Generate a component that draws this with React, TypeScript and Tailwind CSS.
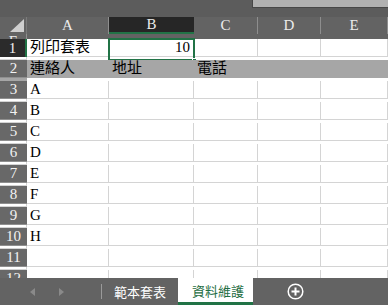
import React from 'react';

const FONT = { fontFamily: '"Liberation Serif", "Noto Sans CJK TC", serif' };
const COLS = ['A', 'B', 'C', 'D', 'E', 'F'];
const GRID = 'grid grid-cols-[27px_82px_85px_64px_63px_67px]';

type Row = { n: number; cells: string[]; fill?: boolean };

const rows: Row[] = [
  { n: 1, cells: ['列印套表', '10', '', '', '', ''] },
  { n: 2, cells: ['連絡人', '地址', '電話', '', '', ''], fill: true },
  { n: 3, cells: ['A', '', '', '', '', ''] },
  { n: 4, cells: ['B', '', '', '', '', ''] },
  { n: 5, cells: ['C', '', '', '', '', ''] },
  { n: 6, cells: ['D', '', '', '', '', ''] },
  { n: 7, cells: ['E', '', '', '', '', ''] },
  { n: 8, cells: ['F', '', '', '', '', ''] },
  { n: 9, cells: ['G', '', '', '', '', ''] },
  { n: 10, cells: ['H', '', '', '', '', ''] },
  { n: 11, cells: ['', '', '', '', '', ''] },
  { n: 12, cells: ['', '', '', '', '', ''] },
];

export default function App() {
  return (
    <div className="w-[388px] h-[305px] overflow-hidden flex flex-col bg-[#5c5c5c] text-[15px] leading-none" style={FONT}>
      {/* top strip */}
      <div className="h-[17px] shrink-0 flex justify-end">
        <div className="w-[136px] h-[8px] bg-[#b1b1b1] border-l border-b border-[#474747]" />
      </div>

      {/* sheet */}
      <div className="flex-1 overflow-hidden bg-white">
        {/* column headers */}
        <div className={`${GRID} h-[22px] bg-[#636363] text-[#ececec]`}>
          <div className="relative border-r border-[#7a7a7a]">
            <svg className="absolute right-[2px] bottom-[2px]" width="14" height="13" viewBox="0 0 14 13">
              <polygon points="14,0 14,13 0,13" fill="#cfcfcf" />
            </svg>
          </div>
          {COLS.map((c) => (
            <div
              key={c}
              className={
                c === 'B'
                  ? 'flex items-center justify-center bg-[#262626] border-b-2 border-[#217346]'
                  : 'flex items-center justify-center border-r border-[#8e8e8e]'
              }
            >
              {c}
            </div>
          ))}
        </div>

        {rows.map((r) => (
          <div key={r.n} className={`${GRID} h-[21px] relative`}>
            <div
              className={
                r.n === 1
                  ? 'flex items-center justify-center bg-[#2b2b2b] text-[#f2f2f2] border-r-2 border-[#217346]'
                  : 'flex items-center justify-center bg-[#686868] text-[#f2f2f2] border-b border-[#8f8f8f]'
              }
            >
              {r.n}
            </div>
            {r.cells.map((v, i) => (
              <div
                key={i}
                className={
                  r.fill
                    ? 'flex items-center px-[3px] bg-[#a6a6a6] text-black border-b border-[#a6a6a6]'
                    : `flex items-center px-[3px] text-black border-r border-b border-[#d4d4d4] ${i === 1 && r.n === 1 ? 'justify-end' : ''}`
                }
              >
                {v}
              </div>
            ))}
            {r.n === 1 && (
              <div className="absolute left-[108px] top-[-1px] w-[87px] h-[23px] border-2 border-[#217346] pointer-events-none">
                <div className="absolute right-[-4px] bottom-[-4px] w-[5px] h-[5px] bg-[#217346] border border-white" />
              </div>
            )}
          </div>
        ))}
      </div>

      {/* sheet tabs */}
      <div className="h-[27px] shrink-0 flex items-stretch bg-[#636363] text-[13px]" style={{ fontFamily: '"Noto Sans CJK TC", sans-serif' }}>
        <div className="w-[102px] flex items-center pl-[30px] gap-[24px] border-r border-[#9a9a9a] my-[6px]">
          <svg width="5" height="8" viewBox="0 0 5 8"><polygon points="5,0 5,8 0,4" fill="#8a8a8a" /></svg>
          <svg width="5" height="8" viewBox="0 0 5 8"><polygon points="0,0 0,8 5,4" fill="#8a8a8a" /></svg>
        </div>
        <div className="w-[76px] flex items-center pl-[12px] text-white">範本套表</div>
        <div className="w-[75px] flex items-center pl-[14px] bg-white text-[#1f6e43] border-b-[3px] border-[#217346]">資料維護</div>
        <div className="w-[84px] flex items-center justify-center">
          <svg width="17" height="17" viewBox="0 0 17 17">
            <circle cx="8.5" cy="8.5" r="7.3" fill="none" stroke="#ffffff" strokeWidth="1.5" />
            <path d="M8.5 4.5v8M4.5 8.5h8" stroke="#ffffff" strokeWidth="2" />
          </svg>
        </div>
      </div>
    </div>
  );
}
